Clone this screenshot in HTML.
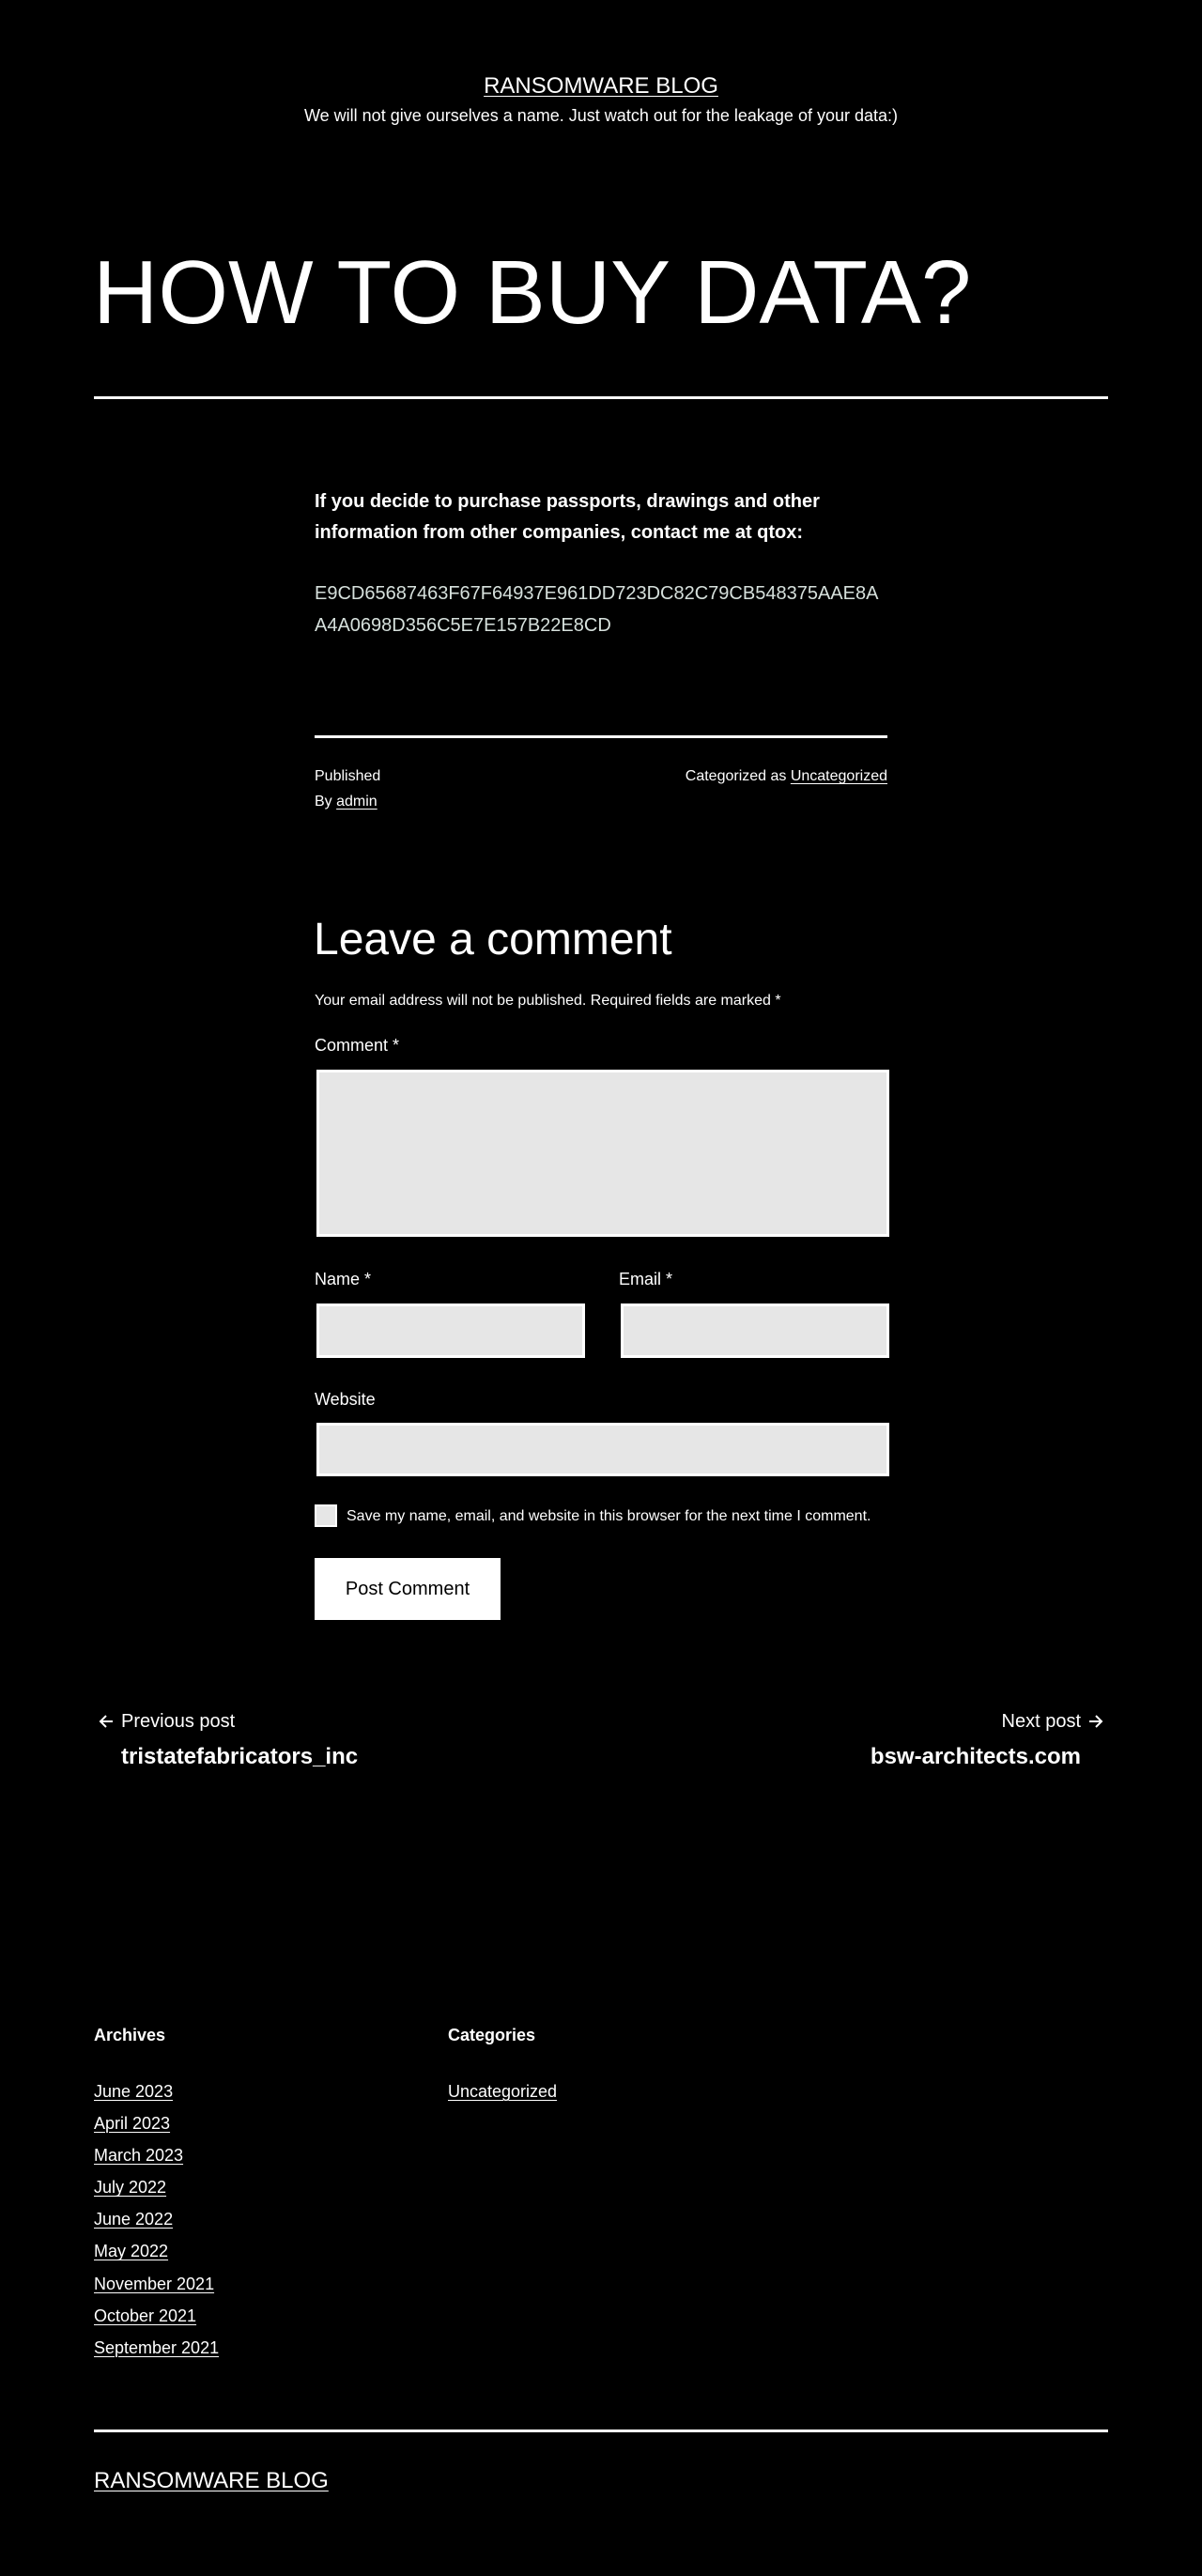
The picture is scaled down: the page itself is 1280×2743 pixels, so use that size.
<!DOCTYPE html>
<html><head><meta charset="utf-8"><style>
*{margin:0;padding:0;box-sizing:border-box}
html,body{width:1280px;height:2743px;background:#000;color:#fff;font-family:"Liberation Sans",Arial,sans-serif;overflow:hidden}
.a{position:absolute;white-space:nowrap}
a{color:#fff;text-decoration:underline;text-underline-offset:3px;text-decoration-thickness:1px}
.hr{position:absolute;height:3px;background:#fff}
.box{position:absolute;background:#e6e6e6;border:3px solid #fff}
</style></head><body>
<div class="a" style="left:0;width:1280px;text-align:center;top:77px;font-size:24px;line-height:30px"><a href="#">RANSOMWARE BLOG</a></div>
<div class="a" style="left:0;width:1280px;text-align:center;top:112px;font-size:18px;line-height:22px">We will not give ourselves a name. Just watch out for the leakage of your data:)</div>
<div class="a" style="left:99px;top:257px;font-size:96px;line-height:110px">HOW TO BUY DATA?</div>
<div class="hr" style="left:100px;width:1080px;top:422px"></div>
<div class="a" style="left:335px;top:518px;font-size:20px;line-height:33px;font-weight:bold">If you decide to purchase passports, drawings and other<br>information from other companies, contact me at qtox:</div>
<div class="a" style="left:335px;top:615px;font-size:20px;line-height:34px;color:#d6e0dc">E9CD65687463F67F64937E961DD723DC82C79CB548375AAE8A<br>A4A0698D356C5E7E157B22E8CD</div>
<div class="hr" style="left:335px;width:610px;top:783px"></div>
<div class="a" style="left:335px;top:816px;font-size:16px;line-height:22px">Published</div>
<div class="a" style="left:335px;top:843px;font-size:16px;line-height:22px">By <a href="#">admin</a></div>
<div class="a" style="right:335px;top:816px;font-size:16px;line-height:22px">Categorized as <a href="#">Uncategorized</a></div>
<div class="a" style="left:334px;top:973px;font-size:48px;line-height:56px">Leave a comment</div>
<div class="a" style="left:335px;top:1056px;font-size:16px;line-height:20px">Your email address will not be published. Required fields are marked *</div>
<div class="a" style="left:335px;top:1102px;font-size:18px;line-height:22px">Comment *</div>
<div class="box" style="left:337px;top:1139px;width:610px;height:178px"></div>
<div class="a" style="left:335px;top:1351px;font-size:18px;line-height:22px">Name *</div>
<div class="a" style="left:659px;top:1351px;font-size:18px;line-height:22px">Email *</div>
<div class="box" style="left:337px;top:1388px;width:286px;height:58px"></div>
<div class="box" style="left:661px;top:1388px;width:286px;height:58px"></div>
<div class="a" style="left:335px;top:1479px;font-size:18px;line-height:22px">Website</div>
<div class="box" style="left:337px;top:1515px;width:610px;height:57px"></div>
<div class="box" style="left:335px;top:1602px;width:24px;height:24px;border-width:2px"></div>
<div class="a" style="left:369px;top:1605px;font-size:16px;line-height:20px">Save my name, email, and website in this browser for the next time I comment.</div>
<div class="a" style="left:335px;top:1659px;width:198px;height:66px;background:#fff;color:#000;font-size:20px;line-height:66px;text-align:center">Post Comment</div>
<svg class="a" style="left:103px;top:1823px" width="20" height="20" viewBox="0 0 20 20"><path d="M17 10H4M10 4L4 10L10 16" stroke="#fff" stroke-width="2" fill="none"/></svg>
<div class="a" style="left:129px;top:1821px;font-size:20px;line-height:24px">Previous post</div>
<div class="a" style="left:129px;top:1856px;font-size:24px;line-height:30px;font-weight:bold">tristatefabricators_inc</div>
<div class="a" style="right:129px;top:1821px;font-size:20px;line-height:24px">Next post</div>
<svg class="a" style="left:1157px;top:1823px" width="20" height="20" viewBox="0 0 20 20"><path d="M3 10H16M10 4L16 10L10 16" stroke="#fff" stroke-width="2" fill="none"/></svg>
<div class="a" style="right:129px;top:1856px;font-size:24px;line-height:30px;font-weight:bold">bsw-architects.com</div>
<div class="a" style="left:100px;top:2156px;font-size:18px;line-height:22px;font-weight:bold">Archives</div>
<div class="a" style="left:477px;top:2156px;font-size:18px;line-height:22px;font-weight:bold">Categories</div>
<div class="a" style="left:100px;top:2210px;font-size:18px;line-height:34.1px">
<a href="#">June 2023</a><br><a href="#">April 2023</a><br><a href="#">March 2023</a><br><a href="#">July 2022</a><br><a href="#">June 2022</a><br><a href="#">May 2022</a><br><a href="#">November 2021</a><br><a href="#">October 2021</a><br><a href="#">September 2021</a></div>
<div class="a" style="left:477px;top:2210px;font-size:18px;line-height:34px"><a href="#">Uncategorized</a></div>
<div class="hr" style="left:100px;width:1080px;top:2587px"></div>
<div class="a" style="left:100px;top:2627px;font-size:24px;line-height:30px"><a href="#">RANSOMWARE BLOG</a></div>
</body></html>
